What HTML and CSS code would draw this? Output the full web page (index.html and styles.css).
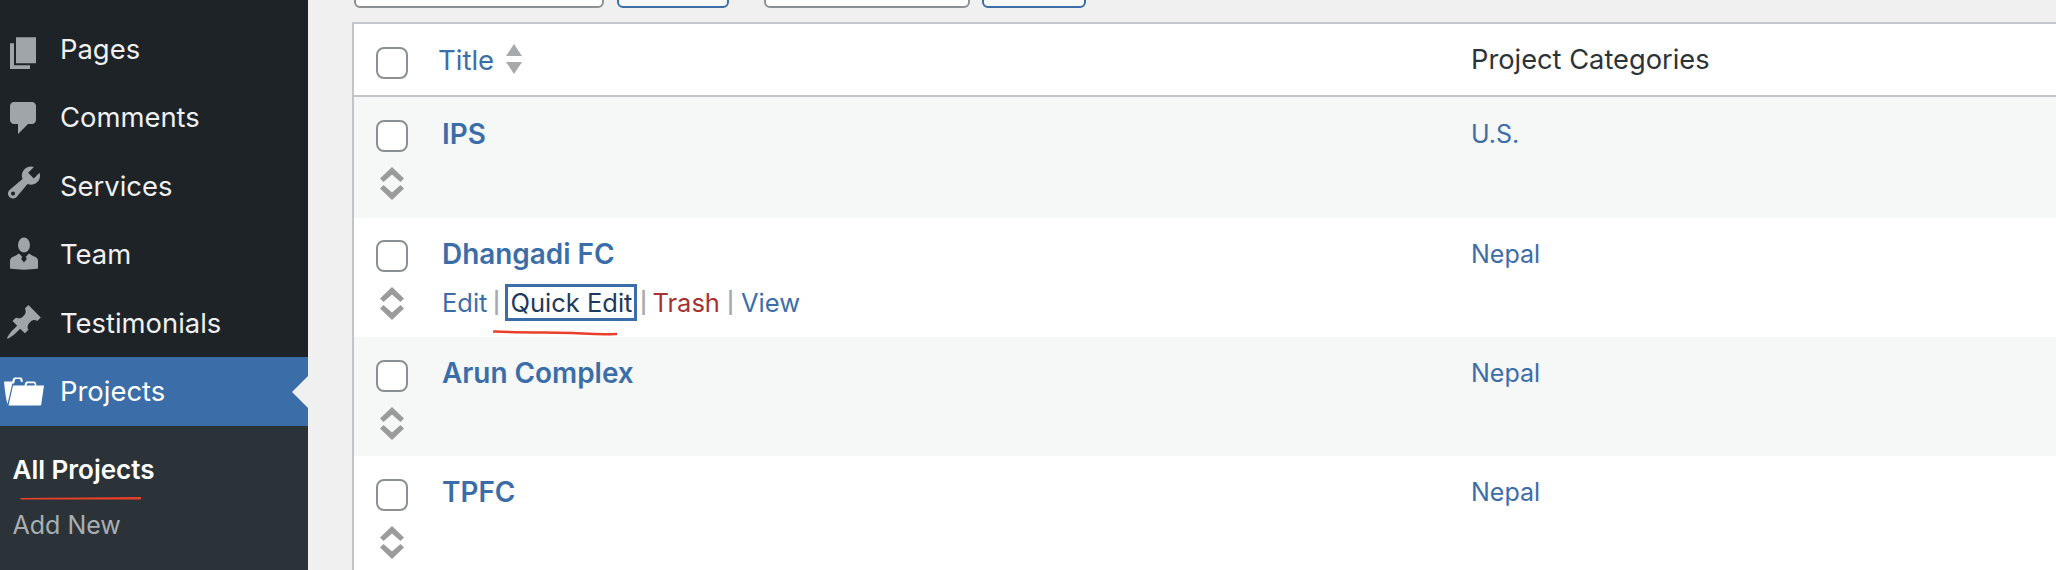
FILE: index.html
```html
<!DOCTYPE html>
<html lang="en">
<head>
<meta charset="utf-8">
<title>Projects</title>
<link rel="stylesheet" href="styles.css">
</head>
<body>
<div class="app">
  <nav class="sidebar">
    <ul class="menu">
      <li class="item"><svg class="icon" viewBox="0 0 48 40"><path transform="translate(4 4.2) scale(2)" d="M6 15V2h10v13H6zm-1 1h8v2H3V5h2v11z"/></svg><span>Pages</span></li>
      <li class="item"><svg class="icon" viewBox="0 0 48 40"><path transform="translate(4 1) scale(2)" d="M5 2h9c1.1 0 2 .9 2 2v7c0 1.1-.9 2-2 2h-2l-5 5v-5H5c-1.100 0-2-.9-2-2V4c0-1.100.9-2 2-2z"/></svg><span>Comments</span></li>
      <li class="item"><svg class="icon" viewBox="0 0 48 40"><path transform="translate(4 -3.500) scale(2)" d="M16.680 9.770c-1.340 1.340-3.300 1.670-4.950.99l-5.410 6.520c-.99.99-2.590.99-3.580 0s-.99-2.590 0-3.580l6.520-5.410c-.68-1.650-.35-3.610.99-4.950 1.280-1.280 3.120-1.620 4.720-1.060l-2.890 2.890 2.820 2.820 2.860-2.870c.53 1.580.18 3.390-1.080 4.660zM3.810 16.210c.4.39 1.040.39 1.430 0 .4-.4.4-1.040 0-1.430-.39-.4-1.030-.4-1.430 0-.39.39-.39 1.030 0 1.430z"/></svg><span>Services</span></li>
      <li class="item"><svg class="icon" viewBox="0 0 48 40"><ellipse cx="24" cy="11" rx="6" ry="7.500"/><path d="M10 34.500V27c0-3 2-4 5-5l4-2.500 3.200 3.300-1 2.200 2.800 3.500 2.800-3.500-1-2.200 3.200-3.300 4 2.500c3 1 5 2 5 5v7.500c-8 1.500-20 1.500-28 0z"/></svg><span>Team</span></li>
      <li class="item"><svg class="icon" viewBox="0 0 48 40"><path transform="translate(4.500 -.3) scale(1.950)" d="M10.440 3.020l1.820-1.820 6.360 6.350-1.830 1.820c-1.050-.68-2.480-.57-3.410.36l-.75.75c-.92.93-1.040 2.350-.35 3.410l-1.830 1.820-2.410-2.410-2.800 2.790c-.42.42-3.380 2.710-3.800 2.290s1.860-3.390 2.280-3.810l2.790-2.790L4.100 9.360l1.830-1.820c1.050.69 2.480.57 3.400-.36l.75-.75c.93-.92 1.050-2.350.36-3.410z"/></svg><span>Testimonials</span></li>
      <li class="item current"><svg class="icon" viewBox="0 0 48 40"><path d="M4 9.500h8.300l.6-2.300c.3-1 1-1.700 2-1.700h5.400c1 0 1.800.6 2 1.600l.6 2.900h-2l-.6-2.400c-.1-.4-.4-.6-.8-.6h-3.600c-.4 0-.7.2-.8.600l-1 3.900h-1.800L7.500 32C6 27 4.800 18 4 9.500z"/><path d="M13 13.500h11.500l.6-2.300c.3-1 1-1.700 2-1.700h6.800c1 0 1.800.6 2 1.600l.5 2.400h7.600L41.300 32c-.1 1-.7 1.500-1.600 1.500H8.500zM26.400 13.500h8.600l-.4-1.600c-.1-.4-.4-.6-.8-.6h-6c-.4 0-.7.2-.8.6z" fill-rule="evenodd"/></svg><span>Projects</span></li>
    </ul>
    <ul class="submenu">
      <li class="sub active">All Projects</li>
      <li class="sub">Add New</li>
    </ul>
    <svg class="mark mark-side" viewBox="0 0 122 4"><path d="M0 2 L121 1 L121 3.500 L1 3.500z"/></svg>
  </nav>
  <main class="content">
    <div class="toolbar">
      <span class="select first"></span><span class="btn first"></span>
      <span class="select second"></span><span class="btn second"></span>
    </div>
    <div class="table">
      <div class="row head">
        <div class="cb-cell"><span class="check"></span></div>
        <div class="title-cell head-title"><a class="link-plain">Title</a>
          <svg class="sort" viewBox="0 0 16 30"><path d="M8 0l8 12H0zM8 30L0 18h16z"/></svg>
        </div>
        <div class="cat-head">Project Categories</div>
      </div>

      <div class="row alt r1">
        <div class="cb-cell"><span class="check"></span><svg class="drag" viewBox="0 0 24 33"><path d="M12 0l12 11.500-3.500 3.500L12 7.500 3.500 15 0 11.500zM12 33L0 21.500 3.500 18l8.500 7.500 8.500-7.500 3.500 3.500z"/></svg></div>
        <div class="title-cell"><a class="name">IPS</a></div>
        <div class="cat"><a>U.S.</a></div>
      </div>

      <div class="row r2">
        <div class="cb-cell"><span class="check"></span><svg class="drag" viewBox="0 0 24 33"><path d="M12 0l12 11.500-3.500 3.500L12 7.500 3.500 15 0 11.500zM12 33L0 21.500 3.500 18l8.500 7.500 8.500-7.500 3.500 3.500z"/></svg></div>
        <div class="title-cell">
          <a class="name">Dhangadi FC</a>
          <div class="actions">
            <a>Edit</a><span class="sep s1">|</span><a class="focus">Quick Edit</a><span class="sep s2">|</span><a class="trash">Trash</a><span class="sep s3">|</span><a>View</a>
            <svg class="mark mark-quick" viewBox="0 0 124 6"><path d="M1 1.500C40 3 70 2 90 3.500 105 4.500 115 4.500 123 4"/></svg>
          </div>
        </div>
        <div class="cat"><a>Nepal</a></div>
      </div>

      <div class="row alt r3">
        <div class="cb-cell"><span class="check"></span><svg class="drag" viewBox="0 0 24 33"><path d="M12 0l12 11.500-3.500 3.500L12 7.500 3.500 15 0 11.500zM12 33L0 21.500 3.500 18l8.500 7.500 8.500-7.500 3.500 3.500z"/></svg></div>
        <div class="title-cell"><a class="name">Arun Complex</a></div>
        <div class="cat"><a>Nepal</a></div>
      </div>

      <div class="row r4">
        <div class="cb-cell"><span class="check"></span><svg class="drag" viewBox="0 0 24 33"><path d="M12 0l12 11.500-3.500 3.500L12 7.500 3.500 15 0 11.500zM12 33L0 21.500 3.500 18l8.500 7.500 8.500-7.500 3.500 3.500z"/></svg></div>
        <div class="title-cell"><a class="name">TPFC</a></div>
        <div class="cat"><a>Nepal</a></div>
      </div>
    </div>
  </main>
</div>
</body>
</html>
```
FILE: styles.css
```css
* { box-sizing: border-box; }
html, body { margin: 0; height: 570px; overflow: hidden; }
body { background: #f0f0f1; font-family: Inter, "Liberation Sans", sans-serif; color: #2c3338; }
ul { list-style: none; margin: 0; padding: 0; }

.app { display: flex; height: 570px; }

/* Sidebar */
.sidebar { position: relative; flex: 0 0 308px; background: #1d2327; }
.menu { padding-top: 14.500px; }
.item { display: flex; align-items: center; height: 68.500px; color: #f0f0f1; font-size: 27.400px; }
.icon { flex: 0 0 48px; width: 48px; height: 40px; margin-right: 12px; fill: #a0a5aa; }
.current { position: relative; height: 69px; background: #3b6ea9; color: #fff; }
.current .icon { fill: #fff; }
.current span { margin-bottom: 2px; }
.current::after {
  content: ""; position: absolute; right: 0; top: 50%; margin-top: -16px;
  border: 16px solid transparent; border-left-width: 0; border-right-color: #f0f0f1;
}
.submenu { background: #2c3338; height: 144px; padding-top: 15px; }
.sub { height: 56px; padding-left: 12.500px; display: flex; align-items: center; font-size: 25px; color: #a9aeb3; }
.sub.active { color: #fff; font-weight: 600; font-size: 26px; }

.mark { position: absolute; fill: #e8402a; display: block; }
.mark-side { left: 20px; top: 496px; width: 122px; height: 4px; }
.mark-quick { left: 51px; top: 46px; width: 124px; height: 6px; fill: none; stroke: #e8402a; stroke-width: 2.600; stroke-linecap: round; }

/* Content */
.content { flex: 1; min-width: 0; padding-left: 44px; overflow: hidden; }
.toolbar { display: flex; align-items: flex-end; height: 8px; overflow: hidden; margin-left: 2px; }
.select, .btn { display: block; flex: none; height: 40px; border-radius: 6px; border-style: solid; border-width: 2px; }
.select { background: #fff; border-color: #8c8f94; }
.btn { background: #f6f7f7; border-color: #3b6ea9; }
.select.first { width: 250px; margin-right: 13px; }
.btn.first { width: 112px; margin-right: 35px; }
.select.second { width: 206px; margin-right: 12px; }
.btn.second { width: 104px; }

.table { margin-top: 14px; width: 1800px; background: #fff; border: 2px solid #c3c4c7; border-width: 2px 0 0 2px; }
.row { display: grid; grid-template-columns: 85px 1018px 1fr; align-items: start; }
.head { height: 73px; border-bottom: 2px solid #c3c4c7; }
.alt { background: #f6f7f7; }
.r1 { height: 121px; }
.r2 { height: 119px; }
.r3 { height: 119px; }
.r4 { height: 119px; }

.cb-cell { display: flex; flex-direction: column; padding-left: 22px; }
.check { display: block; width: 32px; height: 32px; margin-top: 23px; background: #fff; border: 2px solid #8c8f94; border-radius: 8px; }
.r2 .check { margin-top: 22px; }
.drag { display: block; width: 24px; height: 33px; margin: 15px 0 0 4px; fill: #9b9b9b; }

.title-cell { padding-left: 3px; font-size: 27.900px; }
.head-title { display: flex; align-items: flex-start; padding: 0; color: #3b6ea9; font-size: 27.500px; }
.link-plain { color: #3b6ea9; line-height: 34px; margin: 19px 0 0 -1px; }
.sort { width: 16px; height: 30px; margin: 20px 0 0 12px; fill: #a7aaad; }
.name { display: block; color: #3b6ea9; font-weight: 600; line-height: 34px; padding-top: 19px; }
.r1 .name, .r1 .cat { padding-top: 20px; }
.actions { position: relative; display: flex; align-items: center; height: 37px; margin-top: 13px; font-size: 25.500px; color: #3b6ea9; }
.sep { flex: none; text-align: center; font-size: 21px; font-weight: 600; color: #a7aaad; }
.s1 { width: 18px; }
.s2 { width: 12px; margin-right: 3px; }
.s3 { width: 21px; }
.focus { flex: none; width: 132px; height: 37px; line-height: 31px; padding-left: 2px; white-space: nowrap; color: #1d3a5c; border: 3px solid #3b6ea9; }
.trash { color: #a63232; }

.cat-head { padding-top: 19px; margin-left: 14px; font-size: 27.250px; line-height: 34px; color: #2c3338; }
.cat { padding-top: 19px; margin-left: 14px; line-height: 34px; font-size: 25px; color: #3b6ea9; }
```
